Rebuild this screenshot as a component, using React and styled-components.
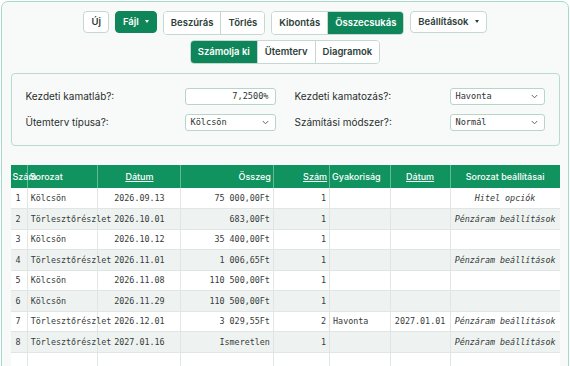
import React from "react";
import styled, { createGlobalStyle, css } from "styled-components";

const GlobalStyle = createGlobalStyle`
  body {
    margin: 0;
    background: #ffffff;
    font-family: Inter, "Noto Sans", sans-serif;
    overflow: hidden;
  }
`;

const green = "#0f8659";
const mono = `"DejaVu Sans Mono", "Liberation Mono", monospace`;

const Card = styled.div`
  margin: 1px 1px 0 1px;
  border: 1.5px solid #a6dac8;
  border-radius: 7px;
  background: #f8fafa;
  padding-top: 8.5px;
  min-height: 420px;
`;

const Toolbar = styled.div`
  display: flex;
  flex-direction: column;
  align-items: center;
  gap: 5px;
`;

const ToolRow = styled.div`
  display: flex;
  gap: 6px;
`;

const Group = styled.div`
  display: flex;
  border: 1px solid #c3d9d1;
  border-radius: 4px;
  overflow: hidden;
  background: #fff;
  & > button + button {
    border-left: 1px solid #c3d9d1;
  }
`;

const Button = styled.button`
  height: 22px;
  box-sizing: border-box;
  padding: 0 7px;
  border: none;
  font-family: Inter, "Noto Sans", sans-serif;
  font-size: 9.5px;
  font-weight: 600;
  color: #2c3d37;
  background: #fff;
  display: flex;
  align-items: center;
  gap: 6px;
  ${(p) =>
    p.$active &&
    css`
      background: ${green};
      color: #fff;
    `}
`;

const Single = styled(Button)`
  border: 1px solid #c3d9d1;
  border-radius: 4px;
  ${(p) =>
    p.$active &&
    css`
      border-color: ${green};
    `}
`;

const Caret = styled.span`
  width: 0;
  height: 0;
  border-left: 2.5px solid transparent;
  border-right: 2.5px solid transparent;
  border-top: 3px solid currentColor;
`;

const Panel = styled.div`
  margin: 9px 8.5px 0 8.5px;
  border: 1px solid #b6dccf;
  border-radius: 4px;
  padding: 14px 14px 14px 14px;
  display: grid;
  grid-template-columns: 1fr 1fr;
  column-gap: 19px;
  row-gap: 9px;
`;

const Field = styled.div`
  display: flex;
  align-items: center;
  justify-content: space-between;
  height: 17px;
`;

const Label = styled.span`
  font-size: 10px;
  color: #2a2f2d;
`;

const Box = styled.div`
  position: relative;
  box-sizing: border-box;
  width: ${(p) => p.$w}px;
  height: 17px;
  border: 1px solid #b8d5cb;
  border-radius: 3px;
  background: #fff;
  font-family: ${mono};
  font-size: 8.6px;
  color: #2e3431;
  display: flex;
  align-items: center;
  justify-content: ${(p) => (p.$right ? "flex-end" : "space-between")};
  padding: 0 6px 0 5px;
`;

const Chevron = () => (
  <svg width="7" height="5" viewBox="0 0 7 5">
    <path d="M0.8 1 L3.5 3.8 L6.2 1" fill="none" stroke="#555" strokeWidth="0.9" />
  </svg>
);

const TableWrap = styled.div`
  margin: 19.5px 8.5px 0 8.5px;
`;

const Table = styled.table`
  width: 100%;
  border-collapse: collapse;
  table-layout: fixed;
`;

const Th = styled.th`
  height: 23px;
  background: #10935f;
  color: #fff;
  font-size: 9px;
  font-weight: 500;
  text-align: ${(p) => p.$align || "left"};
  padding: 0 2px;
  white-space: nowrap;
  overflow: visible;
  border-left: 1px solid #5fbb94;
  text-decoration: ${(p) => (p.$link ? "underline" : "none")};
  &:first-child {
    border-left: none;
  }
`;

const Tr = styled.tr`
  background: ${(p) => (p.$alt ? "#eef3f1" : "#ffffff")};
`;

const Td = styled.td`
  height: 20.5px;
  box-sizing: border-box;
  padding: 0 3px;
  font-family: ${mono};
  font-size: 8.4px;
  color: #363b39;
  white-space: nowrap;
  overflow: visible;
  text-align: ${(p) => p.$align || "left"};
  font-style: ${(p) => (p.$italic ? "italic" : "normal")};
  border-left: 1px solid #dfe6e3;
  border-bottom: 1px solid #dfe6e3;
  &:first-child {
    border-left: none;
    padding-left: 5px;
  }
`;

const rows = [
  [1, "Kölcsön", "2026.09.13", "75 000,00Ft", 1, "", "", "Hitel opciók"],
  [2, "Törlesztőrészlet", "2026.10.01", "683,00Ft", 1, "", "", "Pénzáram beállítások"],
  [3, "Kölcsön", "2026.10.12", "35 400,00Ft", 1, "", "", ""],
  [4, "Törlesztőrészlet", "2026.11.01", "1 006,65Ft", 1, "", "", "Pénzáram beállítások"],
  [5, "Kölcsön", "2026.11.08", "110 500,00Ft", 1, "", "", ""],
  [6, "Kölcsön", "2026.11.29", "110 500,00Ft", 1, "", "", ""],
  [7, "Törlesztőrészlet", "2026.12.01", "3 029,55Ft", 2, "Havonta", "2027.01.01", "Pénzáram beállítások"],
  [8, "Törlesztőrészlet", "2027.01.16", "Ismeretlen", 1, "", "", "Pénzáram beállítások"],
  ["", "", "", "", "", "", "", ""],
];

const widths = [16.7, 70.6, 82.7, 92.3, 56, 60.3, 60, 109];
const aligns = ["left", "left", "center", "right", "right", "left", "center", "center"];

const App = () => {
  return (
    <>
      <GlobalStyle />
      <Card>
        <Toolbar>
          <ToolRow>
            <Single>Új</Single>
            <Single $active>
              Fájl <Caret />
            </Single>
            <Group>
              <Button>Beszúrás</Button>
              <Button>Törlés</Button>
            </Group>
            <Group>
              <Button>Kibontás</Button>
              <Button $active>Összecsukás</Button>
            </Group>
            <Single>
              Beállítások <Caret />
            </Single>
          </ToolRow>
          <ToolRow>
            <Group>
              <Button $active>Számolja ki</Button>
              <Button>Ütemterv</Button>
              <Button>Diagramok</Button>
            </Group>
          </ToolRow>
        </Toolbar>

        <Panel>
          <Field>
            <Label>Kezdeti kamatláb?:</Label>
            <Box $w={91} $right>
              7,2500%
            </Box>
          </Field>
          <Field>
            <Label>Kezdeti kamatozás?:</Label>
            <Box $w={95}>
              Havonta
              <Chevron />
            </Box>
          </Field>
          <Field>
            <Label>Ütemterv típusa?:</Label>
            <Box $w={91}>
              Kölcsön
              <Chevron />
            </Box>
          </Field>
          <Field>
            <Label>Számítási módszer?:</Label>
            <Box $w={95}>
              Normál
              <Chevron />
            </Box>
          </Field>
        </Panel>

        <TableWrap>
          <Table>
            <colgroup>
              {widths.map((w, i) => (
                <col key={i} style={{ width: w }} />
              ))}
            </colgroup>
            <thead>
              <tr>
                <Th>Szám</Th>
                <Th>Sorozat</Th>
                <Th $align="center" $link>
                  Dátum
                </Th>
                <Th $align="right">Összeg</Th>
                <Th $align="right" $link>
                  Szám
                </Th>
                <Th>Gyakoriság</Th>
                <Th $align="center" $link>
                  Dátum
                </Th>
                <Th $align="center">Sorozat beállításai</Th>
              </tr>
            </thead>
            <tbody>
              {rows.map((r, i) => (
                <Tr key={i} $alt={i % 2 === 1}>
                  {r.map((c, j) => (
                    <Td key={j} $align={aligns[j]} $italic={j === 7}>
                      {c}
                    </Td>
                  ))}
                </Tr>
              ))}
            </tbody>
          </Table>
        </TableWrap>
      </Card>
    </>
  );
};

export default App;
